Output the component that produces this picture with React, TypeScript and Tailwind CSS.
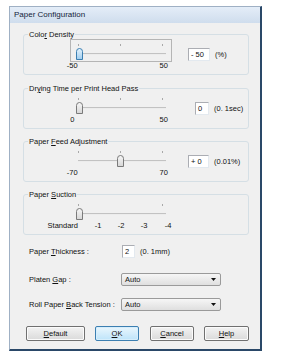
const font = { fontFamily: '"Liberation Sans", Arial, sans-serif' };

type SliderProps = { pos: number; focused?: boolean; ticks: number[] };

const Slider = ({ pos, focused, ticks }: SliderProps) => {
  const x0 = pos - 3;
  return (
    <svg width="102" height="23" className="block ml-[46px]">
      <defs>
        <linearGradient id="thumbBlue" x1="0" y1="0" x2="0" y2="1">
          <stop offset="0" stopColor="#e6f4fd" />
          <stop offset="1" stopColor="#9fcdef" />
        </linearGradient>
        <linearGradient id="thumbGray" x1="0" y1="0" x2="0" y2="1">
          <stop offset="0" stopColor="#f7f7f7" />
          <stop offset="1" stopColor="#d6d6d6" />
        </linearGradient>
      </defs>
      {ticks.map((t) => (
        <rect key={t} x={t} y="5" width="1" height="2" fill="#a8a8a8" />
      ))}
      <rect x="8" y="14" width="88" height="1" fill="#c2c2c2" />
      <rect x="8" y="15" width="88" height="1" fill="#ececec" />
      <path
        d={`M${x0 + 0.5} ${12.5} Q${x0 + 0.5} ${9.5} ${x0 + 3.5} ${9.5} Q${x0 + 6.5} ${9.5} ${x0 + 6.5} ${12.5} V${20.5} H${x0 + 0.5} Z`}
        fill={focused ? 'url(#thumbBlue)' : 'url(#thumbGray)'}
        stroke={focused ? '#3c7fb1' : '#7a7a7a'}
        strokeWidth="1"
      />
      {focused && (
        <rect x="0.5" y="0.5" width="101" height="22" fill="none" stroke="#7a7a7a" strokeDasharray="1 1" />
      )}
    </svg>
  );
};

const Group = ({ label, children }: { label: React.ReactNode; children: React.ReactNode }) => (
  <div className="relative h-[41px] border border-[#d5dfe5] rounded-[3px] pt-[4px]">
    <span className="absolute -top-[5px] left-[4px] px-[1px] bg-[#f0f0f0] leading-[9px]">{label}</span>
    {children}
  </div>
);

const SliderGroup = ({
  label,
  pos,
  focused,
  min,
  max,
  value,
  unit,
  boxW,
  boxMl,
}: {
  label: React.ReactNode;
  pos: number;
  focused?: boolean;
  min: string;
  max: string;
  value: string;
  unit: string;
  boxW: string;
  boxMl: string;
}) => (
  <Group label={label}>
    <div className="flex items-start">
      <div className="w-[148px]">
        <Slider pos={pos} focused={focused} ticks={[8, 50, 92]} />
        <div className="flex -mt-[1px] leading-[9px]">
          <span className="w-[20px] ml-[40px] text-center">{min}</span>
          <span className="w-[20px] ml-[75px] text-center">{max}</span>
        </div>
      </div>
      <div className={`${boxW} ${boxMl} mt-[9px] h-[13px] bg-white border border-[#abadb3] border-r-[#e3e9ef] border-b-[#e3e9ef] pl-[2px] leading-[11px]`}>
        {value}
      </div>
      <span className="ml-[5px] mt-[9px] leading-[13px]">{unit}</span>
    </div>
  </Group>
);

const Select = () => (
  <div className="w-[100px] h-[13px] border border-[#9a9a9a] rounded-[2px] bg-gradient-to-b from-[#f6f6f6] to-[#dfdfdf] flex items-center justify-between pl-[3px] pr-[4px]">
    <span className="leading-[11px]">Auto</span>
    <svg width="5" height="3" className="block">
      <path d="M0 0 H5 L2.5 3 Z" fill="#111" />
    </svg>
  </div>
);

const Button = ({ children, w, primary }: { children: React.ReactNode; w: string; primary?: boolean }) => (
  <div
    className={`${w} h-[15px] rounded-[2px] border flex items-center justify-center leading-[13px] ${
      primary
        ? 'border-[#3c7fb1] bg-gradient-to-b from-[#eaf6fd] to-[#bde4fa] shadow-[inset_0_0_0_1px_#d6eefc]'
        : 'border-[#707070] bg-gradient-to-b from-[#f3f3f3] to-[#dadada] shadow-[inset_0_0_0_1px_#fbfbfb]'
    }`}
  >
    {children}
  </div>
);

export default function App() {
  return (
    <div className="w-[300px] h-[361px] bg-white pt-[6px] pl-[9px] text-[7.5px] text-[#111]" style={font}>
      <div className="w-[253px] h-[345px] flex flex-col border-l border-t border-[#9fb0c4] border-r-2 border-b-2 border-r-[#2a4868] border-b-[#2a4868]">
        <div className="h-[16px] bg-gradient-to-b from-[#e4edf8] to-[#cfdded] flex items-center pl-[4px] text-[8px] text-[#13243a]">
          Paper Configuration
        </div>
        <div className="flex-1 bg-[#f0f0f0] pl-[13px] pr-[11px] pt-[11px]">
          <SliderGroup
            label={<>Colo<u>r</u> Density</>}
            pos={9}
            focused
            min="-50"
            max="50"
            value="- 50"
            unit="(%)"
            boxW="w-[22px]"
            boxMl="ml-[16px]"
          />
          <div className="mt-[13px]">
            <SliderGroup
              label={<>Dr<u>y</u>ing Time per Print Head Pass</>}
              pos={9}
              min="0"
              max="50"
              value="0"
              unit="(0. 1sec)"
              boxW="w-[14px]"
              boxMl="ml-[23px]"
            />
          </div>
          <div className="mt-[12px]">
            <SliderGroup
              label={<>Paper <u>F</u>eed Adjustment</>}
              pos={50}
              min="-70"
              max="70"
              value="+ 0"
              unit="(0.01%)"
              boxW="w-[21px]"
              boxMl="ml-[16px]"
            />
          </div>
          <div className="mt-[12px]">
            <Group label={<>Paper <u>S</u>uction</>}>
              <Slider pos={9} ticks={[8, 92]} />
              <div className="flex -mt-[1px] leading-[9px]">
                <span className="w-[54px] text-right">Standard</span>
                <span className="w-[20px] ml-[10px] text-center">-1</span>
                <span className="w-[20px] ml-[3px] text-center">-2</span>
                <span className="w-[20px] ml-[3px] text-center">-3</span>
                <span className="w-[20px] ml-[4px] text-center">-4</span>
              </div>
            </Group>
          </div>
          <div className="flex items-center h-[13px] mt-[10px] pl-[6px]">
            <span className="w-[93px]">
              Paper <u>T</u>hickness :
            </span>
            <div className="w-[13px] h-[13px] bg-white border border-[#abadb3] border-r-[#e3e9ef] border-b-[#e3e9ef] pl-[2px] leading-[11px]">
              2
            </div>
            <span className="ml-[5px]">(0. 1mm)</span>
          </div>
          <div className="flex items-center h-[13px] mt-[15px] pl-[6px]">
            <span className="w-[92px]">
              Platen <u>G</u>ap :
            </span>
            <Select />
          </div>
          <div className="flex items-center h-[13px] mt-[12px] pl-[6px]">
            <span className="w-[92px]">
              Roll Paper <u>B</u>ack Tension :
            </span>
            <Select />
          </div>
          <div className="flex mt-[15px] pl-[3px]">
            <Button w="w-[60px]"><u>D</u>efault</Button>
            <div className="ml-[10px]">
              <Button w="w-[44px]" primary><u>O</u>K</Button>
            </div>
            <div className="ml-[11px]">
              <Button w="w-[44px]"><u>C</u>ancel</Button>
            </div>
            <div className="ml-[10px]">
              <Button w="w-[45px]"><u>H</u>elp</Button>
            </div>
          </div>
        </div>
      </div>
    </div>
  );
}
